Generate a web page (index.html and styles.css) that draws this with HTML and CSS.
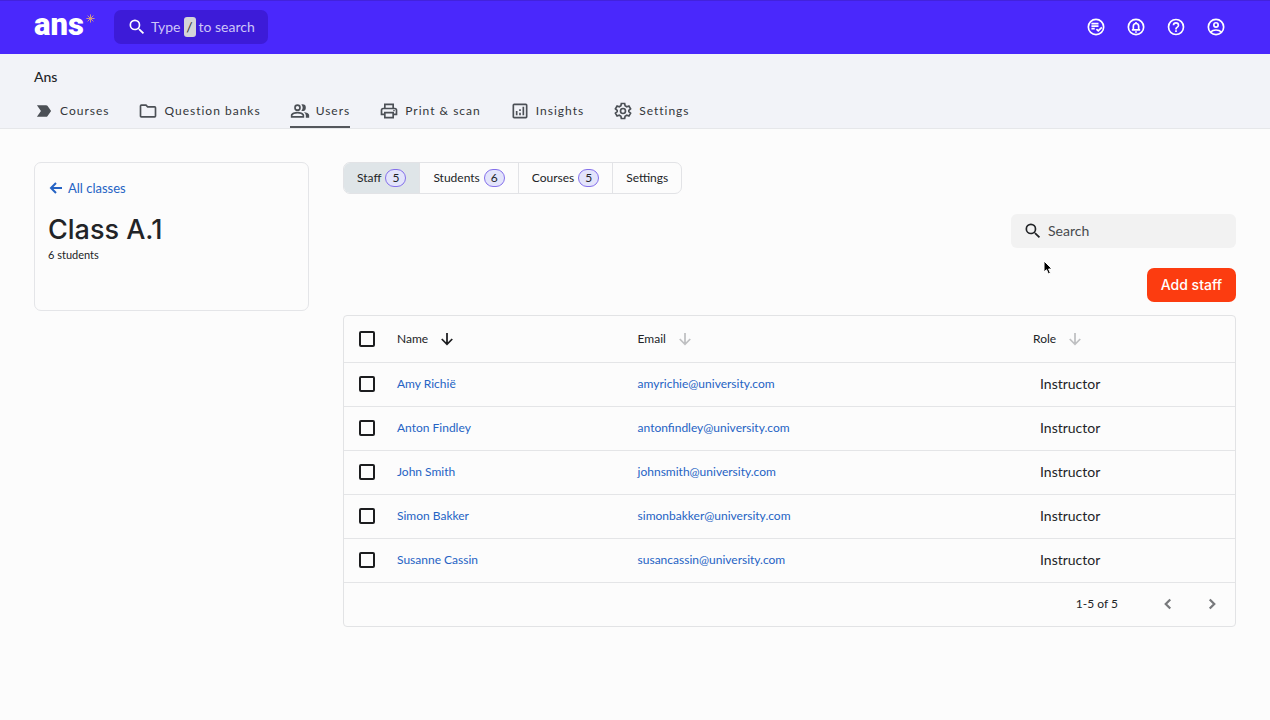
FILE: index.html
```html
<!DOCTYPE html>
<html lang="en">
<head>
    <meta charset="UTF-8">
    <meta name="viewport" content="width=device-width, initial-scale=1.0">
    <title>Class A.1 - Ans</title>
    <link rel="stylesheet" href="styles.css">
</head>
<body>
    <header class="topbar">
        <a class="logo" href="#">ans<svg class="logo-star" viewBox="0 0 10 10" aria-hidden="true"><path d="M5 .5v9M.5 5h9M1.8 1.8l6.4 6.4M8.2 1.8L1.8 8.2"/></svg></a>
        <button class="quick-search" type="button">
            <svg class="icon" viewBox="0 0 24 24" aria-hidden="true"><path d="M15.5 14h-.79l-.28-.27A6.47 6.47 0 0 0 16 9.5 6.5 6.5 0 1 0 9.5 16c1.61 0 3.09-.59 4.23-1.57l.27.28v.79l5 4.99L20.49 19l-4.99-5zm-6 0a4.5 4.5 0 1 1 0-9 4.5 4.5 0 0 1 0 9z"/></svg>
            <span>Type</span><kbd>/</kbd><span>to search</span>
        </button>
        <div class="topbar-actions">
            <button type="button" aria-label="Tasks">
                <svg class="icon line" viewBox="0 0 24 24"><circle cx="12" cy="12" r="9.2"/><path d="M6.5 8h8.5M6.5 11h8.5M6.5 14h4M12.5 14.5l2.2 2.2 4.3-4.3"/></svg>
            </button>
            <button type="button" aria-label="Notifications">
                <svg class="icon line" viewBox="0 0 24 24"><circle cx="12" cy="12" r="9.2"/><path d="M7 15.5h10M8.8 15v-4a3.2 3.2 0 0 1 6.4 0v4M12 6v1.5M11 18h2"/></svg>
            </button>
            <button type="button" aria-label="Help">
                <svg class="icon" viewBox="0 0 24 24"><path d="M11 18h2v-2h-2v2zm1-16a10 10 0 1 0 0 20 10 10 0 0 0 0-20zm0 18a8 8 0 1 1 0-16 8 8 0 0 1 0 16zm0-14a4 4 0 0 0-4 4h2a2 2 0 1 1 4 0c0 2-3 1.75-3 5h2c0-2.25 3-2.5 3-5a4 4 0 0 0-4-4z"/></svg>
            </button>
            <button type="button" aria-label="Account">
                <svg class="icon line" viewBox="0 0 24 24"><circle cx="12" cy="12" r="9.2"/><circle cx="12" cy="9.5" r="2.6"/><path d="M5.5 18c1.8-1.7 4-2.4 6.5-2.4s4.7.7 6.5 2.4"/></svg>
            </button>
        </div>
    </header>

    <div class="subnav">
        <p class="school">Ans</p>
        <nav class="menu">
            <a href="#"><svg class="icon" viewBox="0 0 24 24"><path d="M3.5 18.99l11 .01c.67 0 1.27-.33 1.63-.84L20.5 12l-4.37-6.16c-.36-.51-.96-.84-1.63-.84l-11 .01L8.34 12z"/></svg>Courses</a>
            <a href="#"><svg class="icon" viewBox="0 0 24 24"><path d="M9.17 6l2 2H20v10H4V6h5.17M10 4H4a2 2 0 0 0-2 2v12c0 1.1.9 2 2 2h16a2 2 0 0 0 2-2V8a2 2 0 0 0-2-2h-8l-2-2z"/></svg>Question banks</a>
            <a class="active" href="#"><svg class="icon" viewBox="0 0 24 24"><path d="M9 4a4 4 0 1 0 0 8 4 4 0 0 0 0-8zm0 6a2 2 0 1 1 0-4 2 2 0 0 1 0 4zM9 13c-2.67 0-8 1.34-8 4v3h16v-3c0-2.66-5.33-4-8-4zm6 5H3v-1c.2-.71 3.3-2 6-2s5.8 1.29 6 2v1zM15 12a4 4 0 1 0 0-8c-.47 0-.91.1-1.33.24a5.98 5.98 0 0 1 0 7.52c.42.14.86.24 1.33.24zM16.67 13.13A5.28 5.28 0 0 1 19 17v3h4v-3c0-2.18-3.58-3.47-6.33-3.87z"/></svg>Users</a>
            <a href="#"><svg class="icon" viewBox="0 0 24 24"><path d="M19 8h-1V3H6v5H5a3 3 0 0 0-3 3v6h4v4h12v-4h4v-6a3 3 0 0 0-3-3zM8 5h8v3H8V5zm8 12v2H8v-4h8v2zm2-2v-2H6v2H4v-4c0-.55.45-1 1-1h14c.55 0 1 .45 1 1v4h-2z"/><circle cx="18" cy="11.5" r="1"/></svg>Print &amp; scan</a>
            <a href="#"><svg class="icon" viewBox="0 0 24 24"><path d="M5 3a2 2 0 0 0-2 2v14c0 1.1.9 2 2 2h14a2 2 0 0 0 2-2V5a2 2 0 0 0-2-2H5zm0 2h14v14H5V5zM7 12h2v5H7zM11 14h2v3h-2zM11 10h2v2h-2zM15 7h2v10h-2z"/></svg>Insights</a>
            <a href="#"><svg class="icon line" viewBox="0 0 24 24"><circle cx="12" cy="12" r="3"/><path d="M10 3h4l.5 2.7 2 1.2 2.6-.9 2 3.4-2.1 1.8v1.6l2.1 1.8-2 3.4-2.6-.9-2 1.2L14 21h-4l-.5-2.7-2-1.2-2.6.9-2-3.4L5 12.8v-1.6L2.9 9.4l2-3.4 2.6.9 2-1.2z"/></svg>Settings</a>
        </nav>
    </div>

    <div class="page">
        <aside class="class-card">
            <a class="back" href="#"><svg class="icon line" viewBox="0 0 16 16" aria-hidden="true"><path d="M14 8H3M8 3L3 8l5 5"/></svg>All classes</a>
            <h1>Class A.1</h1>
            <p>6 students</p>
        </aside>

        <main>
            <nav class="tabs">
                <a class="active" href="#">Staff <span class="count">5</span></a>
                <a href="#">Students <span class="count">6</span></a>
                <a href="#">Courses <span class="count">5</span></a>
                <a href="#">Settings</a>
            </nav>

            <div class="toolbar">
                <label class="search">
                    <svg class="icon" viewBox="0 0 24 24" aria-hidden="true"><path d="M15.5 14h-.79l-.28-.27A6.47 6.47 0 0 0 16 9.5 6.5 6.5 0 1 0 9.5 16c1.61 0 3.09-.59 4.23-1.57l.27.28v.79l5 4.99L20.49 19l-4.99-5zm-6 0a4.5 4.5 0 1 1 0-9 4.5 4.5 0 0 1 0 9z"/></svg>
                    <input type="search" placeholder="Search" aria-label="Search">
                </label>
                <button class="add-button" type="button">Add staff</button>
            </div>

            <div class="table-box">
                <table>
                    <thead>
                        <tr>
                            <th class="col-check"><input type="checkbox" aria-label="Select all"></th>
                            <th class="col-name"><button class="sort sorted" type="button">Name <svg class="icon line" viewBox="0 0 16 16"><path d="M8 1v13M2 8l6 6 6-6"/></svg></button></th>
                            <th><button class="sort" type="button">Email <svg class="icon line" viewBox="0 0 16 16"><path d="M8 1v13M2 8l6 6 6-6"/></svg></button></th>
                            <th class="col-role"><button class="sort" type="button">Role <svg class="icon line" viewBox="0 0 16 16"><path d="M8 1v13M2 8l6 6 6-6"/></svg></button></th>
                        </tr>
                    </thead>
                    <tbody>
                        <tr>
                            <td class="col-check"><input type="checkbox" aria-label="Select Amy Richië"></td>
                            <td><a href="#">Amy Richië</a></td>
                            <td><a href="#">amyrichie@university.com</a></td>
                            <td class="role">Instructor</td>
                        </tr>
                        <tr>
                            <td class="col-check"><input type="checkbox" aria-label="Select Anton Findley"></td>
                            <td><a href="#">Anton Findley</a></td>
                            <td><a href="#">antonfindley@university.com</a></td>
                            <td class="role">Instructor</td>
                        </tr>
                        <tr>
                            <td class="col-check"><input type="checkbox" aria-label="Select John Smith"></td>
                            <td><a href="#">John Smith</a></td>
                            <td><a href="#">johnsmith@university.com</a></td>
                            <td class="role">Instructor</td>
                        </tr>
                        <tr>
                            <td class="col-check"><input type="checkbox" aria-label="Select Simon Bakker"></td>
                            <td><a href="#">Simon Bakker</a></td>
                            <td><a href="#">simonbakker@university.com</a></td>
                            <td class="role">Instructor</td>
                        </tr>
                        <tr>
                            <td class="col-check"><input type="checkbox" aria-label="Select Susanne Cassin"></td>
                            <td><a href="#">Susanne Cassin</a></td>
                            <td><a href="#">susancassin@university.com</a></td>
                            <td class="role">Instructor</td>
                        </tr>
                    </tbody>
                </table>
                <div class="pager">
                    <span>1-5 of 5</span>
                    <div class="pager-buttons">
                        <button type="button" aria-label="Previous page"><svg class="icon line" viewBox="0 0 16 16"><path d="M10 4L6 8l4 4"/></svg></button>
                        <button type="button" aria-label="Next page"><svg class="icon line" viewBox="0 0 16 16"><path d="M6 4l4 4-4 4"/></svg></button>
                    </div>
                </div>
            </div>
        </main>
    </div>

    <svg class="cursor" viewBox="0 0 12 16" aria-hidden="true"><path d="M1 1v11l2.5-2.3L5.4 14l2-.9L5.6 9H9z"/></svg>
</body>
</html>
```
FILE: styles.css
```css
* {
    box-sizing: border-box;
}

body {
    margin: 0;
    min-height: 100vh;
    background: #fcfcfc;
    color: #222427;
    font-family: Lato, "Open Sans", sans-serif;
    font-size: 12px;
    line-height: 16px;
}

h1, p {
    margin: 0;
}

a {
    color: #2563c4;
    text-decoration: none;
}

button {
    border: 0;
    padding: 0;
    background: none;
    color: inherit;
    font: inherit;
    cursor: pointer;
}

.icon {
    display: block;
    flex: none;
    width: 20px;
    height: 20px;
    fill: currentColor;
}

.icon.line {
    fill: none;
    stroke: currentColor;
    stroke-width: 2;
}

/* Top bar */
.topbar {
    display: flex;
    align-items: center;
    height: 54px;
    padding: 0 34px 1px;
    background: #4a28fc;
    border-top: 1px solid #4322dc;
    color: #fff;
}

.logo {
    display: flex;
    align-items: flex-start;
    gap: 2px;
    width: 80px;
    padding-bottom: 4px;
    color: #fff;
    font-family: Roboto, sans-serif;
    font-size: 31px;
    font-weight: 900;
    line-height: 28px;
}

.logo-star {
    width: 9px;
    height: 9px;
    margin-top: 3px;
    stroke: #e0a47c;
    stroke-width: 1;
}

.quick-search {
    display: flex;
    align-items: center;
    gap: 3px;
    height: 34px;
    padding: 0 13px;
    border-radius: 7px;
    background: #3d1bd8;
    color: #cdc5f8;
    font-size: 14px;
}

.quick-search .icon {
    margin-right: 1px;
    color: #fff;
}

.quick-search kbd {
    width: 12px;
    border-radius: 3px;
    background: #d4d4d8;
    color: #333;
    font-family: inherit;
    line-height: 20px;
}

.topbar-actions {
    display: flex;
    margin-left: auto;
}

.topbar-actions button {
    display: flex;
    align-items: center;
    justify-content: center;
    width: 40px;
    height: 40px;
}

/* School menu */
.subnav {
    padding: 15px 34px 0;
    background: #f2f3f8;
    border-bottom: 1px solid #e6e7ea;
}

.school {
    font-size: 14px;
    font-weight: 500;
}

.menu {
    display: flex;
    gap: 29px;
    margin-top: 11px;
}

.menu a {
    display: flex;
    align-items: center;
    gap: 6px;
    height: 32px;
    border-bottom: 2px solid transparent;
    color: #33363a;
    letter-spacing: 1px;
}

.menu .icon {
    color: #4c5056;
}

.menu a.active {
    border-bottom-color: #54575c;
}

/* Page */
.page {
    display: grid;
    grid-template-columns: 275px 1fr;
    align-items: start;
    gap: 34px;
    padding: 33px 34px;
}

.class-card {
    min-height: 149px;
    padding: 17px 13px;
    border: 1px solid #e4e5e8;
    border-radius: 7px;
    font-size: 11px;
}

.class-card h1 {
    margin: 17px 0 0;
    font-family: Inter, sans-serif;
    font-size: 27px;
    font-weight: 500;
    line-height: 34px;
}

.back {
    display: flex;
    align-items: center;
    gap: 4px;
    font-size: 13px;
}

.back .icon {
    width: 16px;
    height: 16px;
}

.tabs {
    display: flex;
    width: fit-content;
    border: 1px solid #e2e3e6;
    border-radius: 7px;
    overflow: hidden;
}

.tabs a {
    display: flex;
    align-items: center;
    gap: 4px;
    height: 30px;
    padding: 0 13px;
    color: #222427;
}

.tabs a + a {
    border-left: 1px solid #e2e3e6;
}

.tabs a.active {
    background: #dfe5e8;
}

.count {
    padding: 0 6px;
    border: 1px solid #8470ea;
    border-radius: 9px;
    background: #e3e4fb;
}

.toolbar {
    display: flex;
    flex-direction: column;
    align-items: flex-end;
    gap: 20px;
    margin: 20px 0 13px;
}

.search {
    display: flex;
    align-items: center;
    gap: 5px;
    width: 225px;
    height: 34px;
    padding: 0 12px;
    border-radius: 6px;
    background: #f2f2f2;
}

.search input {
    width: 100%;
    border: 0;
    padding: 0;
    outline: 0;
    background: none;
    font: inherit;
    font-size: 14px;
}

.search input::placeholder {
    color: #484a4d;
}

.add-button {
    height: 34px;
    padding: 0 14px;
    border-radius: 7px;
    background: #fc3c10;
    color: #fff;
    font-family: Inter, sans-serif;
    font-size: 14px;
    font-weight: 500;
}

/* Table */
.table-box {
    border: 1px solid #e2e3e5;
    border-radius: 4px;
}

table {
    width: 100%;
    table-layout: fixed;
    border-collapse: collapse;
}

th, td {
    height: 44px;
    padding: 0;
    border-bottom: 1px solid #e4e5e7;
    text-align: left;
    font-weight: 400;
}

th {
    height: 46px;
}

.col-check {
    width: 53px;
    padding-left: 15px;
}

.col-name {
    width: 27%;
}

.col-role {
    width: 202px;
}

td.role {
    padding-left: 7px;
    font-size: 14px;
}

input[type="checkbox"] {
    display: block;
    width: 16px;
    height: 16px;
    margin: 0;
    appearance: none;
    border: 2px solid #1c1d1f;
    border-radius: 2px;
}

input[type="checkbox"]:checked {
    background: #1c1d1f;
}

.sort {
    display: flex;
    align-items: center;
    gap: 12px;
}

.sort .icon {
    width: 14px;
    height: 14px;
    color: #bfc0c2;
}

.sort.sorted .icon {
    color: #1c1d1f;
}

.pager {
    display: flex;
    align-items: center;
    justify-content: flex-end;
    gap: 28px;
    height: 43px;
    padding-right: 1px;
}

.pager-buttons {
    display: flex;
}

.pager-buttons button {
    display: flex;
    align-items: center;
    justify-content: center;
    width: 44px;
    height: 44px;
    color: #77797c;
}

.pager .icon {
    width: 18px;
    height: 18px;
}

.cursor {
    position: absolute;
    top: 260px;
    left: 1043px;
    width: 12px;
    height: 16px;
    stroke: #fff;
    stroke-width: 1;
    pointer-events: none;
}
```
